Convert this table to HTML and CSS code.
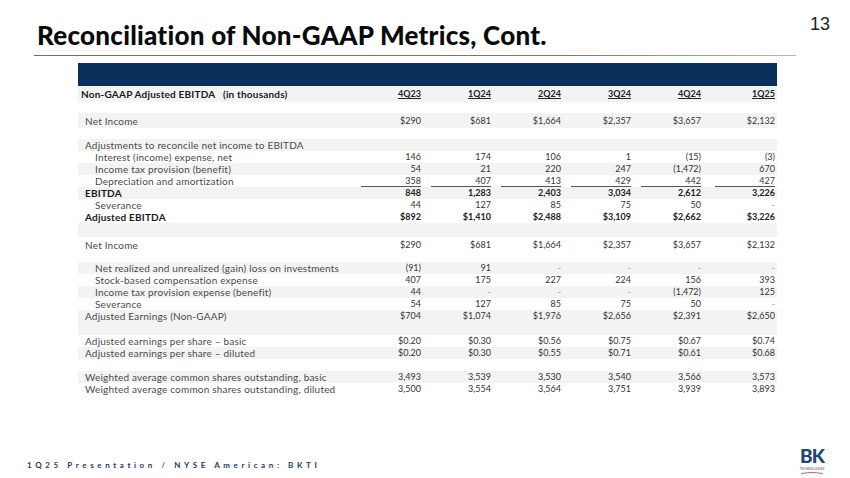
FILE: index.html
```html
<!DOCTYPE html>
<html>
<head>
<meta charset="utf-8">
<link rel="stylesheet" href="styles.css">
</head>
<body>
<div class="slide">
  <div class="top">
    <h1>Reconciliation of Non-GAAP Metrics, Cont.</h1>
    <span class="pg">13</span>
  </div>
  <div class="rule"></div>
  <section class="table">
    <div class="bar"></div>
    <div class="row g head h16">
      <span class="lab hd">Non-GAAP Adjusted EBITDA&nbsp;&nbsp; (in thousands)</span>
      <span class="v"><u>4Q23</u></span><span class="v"><u>1Q24</u></span><span class="v"><u>2Q24</u></span><span class="v"><u>3Q24</u></span><span class="v"><u>4Q24</u></span><span class="v"><u>1Q25</u></span>
    </div>
    <div class="row h11"></div>
    <div class="row g h15">
      <span class="lab">Net Income</span>
      <span class="v">$290</span><span class="v">$681</span><span class="v">$1,664</span><span class="v">$2,357</span><span class="v">$3,657</span><span class="v">$2,132</span>
    </div>
    <div class="row h11"></div>
    <div class="row g">
      <span class="lab">Adjustments to reconcile net income to EBITDA</span>
    </div>
    <div class="row">
      <span class="lab in">Interest (income) expense, net</span>
      <span class="v">146</span><span class="v">174</span><span class="v">106</span><span class="v">1</span><span class="v">(15)</span><span class="v">(3)</span>
    </div>
    <div class="row g">
      <span class="lab in">Income tax provision (benefit)</span>
      <span class="v">54</span><span class="v">21</span><span class="v">220</span><span class="v">247</span><span class="v">(1,472)</span><span class="v">670</span>
    </div>
    <div class="row ul">
      <span class="lab in">Depreciation and amortization</span>
      <span class="v"><span class="u">358</span></span><span class="v"><span class="u">407</span></span><span class="v"><span class="u">413</span></span><span class="v"><span class="u">429</span></span><span class="v"><span class="u">442</span></span><span class="v"><span class="u">427</span></span>
    </div>
    <div class="row g b">
      <span class="lab">EBITDA</span>
      <span class="v">848</span><span class="v">1,283</span><span class="v">2,403</span><span class="v">3,034</span><span class="v">2,612</span><span class="v">3,226</span>
    </div>
    <div class="row">
      <span class="lab in">Severance</span>
      <span class="v">44</span><span class="v">127</span><span class="v">85</span><span class="v">75</span><span class="v">50</span><span class="v d">-</span>
    </div>
    <div class="row b">
      <span class="lab">Adjusted EBITDA</span>
      <span class="v">$892</span><span class="v">$1,410</span><span class="v">$2,488</span><span class="v">$3,109</span><span class="v">$2,662</span><span class="v">$3,226</span>
    </div>
    <div class="row g h14"></div>
    <div class="row h15">
      <span class="lab">Net Income</span>
      <span class="v">$290</span><span class="v">$681</span><span class="v">$1,664</span><span class="v">$2,357</span><span class="v">$3,657</span><span class="v">$2,132</span>
    </div>
    <div class="row h10"></div>
    <div class="row g">
      <span class="lab in">Net realized and unrealized (gain) loss on investments</span>
      <span class="v">(91)</span><span class="v">91</span><span class="v d">-</span><span class="v d">-</span><span class="v d">-</span><span class="v d">-</span>
    </div>
    <div class="row">
      <span class="lab in">Stock-based compensation expense</span>
      <span class="v">407</span><span class="v">175</span><span class="v">227</span><span class="v">224</span><span class="v">156</span><span class="v">393</span>
    </div>
    <div class="row g">
      <span class="lab in">Income tax provision expense (benefit)</span>
      <span class="v">44</span><span class="v d">-</span><span class="v d">-</span><span class="v d">-</span><span class="v">(1,472)</span><span class="v">125</span>
    </div>
    <div class="row">
      <span class="lab in">Severance</span>
      <span class="v">54</span><span class="v">127</span><span class="v">85</span><span class="v">75</span><span class="v">50</span><span class="v d">-</span>
    </div>
    <div class="row g">
      <span class="lab">Adjusted Earnings (Non-GAAP)</span>
      <span class="v">$704</span><span class="v">$1,074</span><span class="v">$1,976</span><span class="v">$2,656</span><span class="v">$2,391</span><span class="v">$2,650</span>
    </div>
    <div class="row g h13"></div>
    <div class="row">
      <span class="lab">Adjusted earnings per share – basic</span>
      <span class="v">$0.20</span><span class="v">$0.30</span><span class="v">$0.56</span><span class="v">$0.75</span><span class="v">$0.67</span><span class="v">$0.74</span>
    </div>
    <div class="row g">
      <span class="lab">Adjusted earnings per share – diluted</span>
      <span class="v">$0.20</span><span class="v">$0.30</span><span class="v">$0.55</span><span class="v">$0.71</span><span class="v">$0.61</span><span class="v">$0.68</span>
    </div>
    <div class="row"></div>
    <div class="row g">
      <span class="lab">Weighted average common shares outstanding, basic</span>
      <span class="v">3,493</span><span class="v">3,539</span><span class="v">3,530</span><span class="v">3,540</span><span class="v">3,566</span><span class="v">3,573</span>
    </div>
    <div class="row">
      <span class="lab">Weighted average common shares outstanding, diluted</span>
      <span class="v">3,500</span><span class="v">3,554</span><span class="v">3,564</span><span class="v">3,751</span><span class="v">3,939</span><span class="v">3,893</span>
    </div>
  </section>
  <footer class="foot">
    <span class="tag">1Q25 Presentation <span class="sl">/</span> NYSE American: BKTI</span>
    <div class="logo">
      <span class="bk">BK</span>
      <span class="tech">TECHNOLOGIES</span>
      <svg class="arc" width="24" height="3" viewBox="0 0 24 3"><path d="M1 2.5 Q12 0.2 23 2.5" fill="none" stroke="#c0504d" stroke-width="0.9"/></svg>
    </div>
  </footer>
</div>
</body>
</html>
```

FILE: styles.css
```css
body {
  margin: 0;
  background: #fff;
}
.slide {
  width: 850px;
  height: 478px;
  display: flex;
  flex-direction: column;
  overflow: hidden;
  font-family: Lato, "Liberation Sans", sans-serif;
  font-variant-ligatures: none;
}
.top {
  height: 55px;
  display: flex;
  justify-content: space-between;
  align-items: flex-start;
  padding: 0 20px 0 37px;
  box-sizing: border-box;
}
h1 {
  margin: 22px 0 0;
  font: 900 26px/26px Lato, "Liberation Sans", sans-serif;
  letter-spacing: 0.25px;
  color: #0a0a0a;
}
.pg {
  margin-top: 15px;
  font: 18px/18px "Liberation Sans", Arial, sans-serif;
  color: #222;
}
.rule {
  height: 1px;
  margin: 0 54px 0 34px;
  background: linear-gradient(90deg, #b5504a, #c25a55 70%, #d9aaa7);
}
.table {
  margin: 7px 0 0 78px;
  width: 699px;
}
.bar {
  height: 23px;
  background: #0b2f5b;
}
.row {
  display: grid;
  grid-template-columns: 273px repeat(5, 70px) 74px;
  padding-right: 2px;
  height: 12px;
  align-items: center;
  color: #333;
}
.g { background: #f3f3f3; }
.h10 { height: 10px; }
.h11 { height: 11px; }
.h13 { height: 13px; }
.h14 { height: 14px; }
.h15 { height: 15px; }
.h16 { height: 16px; }
.lab {
  padding-left: 7px;
  font-size: 10px;
  line-height: 12px;
  letter-spacing: 0.2px;
  color: #4a4a4a;
  white-space: nowrap;
}
.lab.in { padding-left: 17px; }
.lab.hd {
  padding-left: 3px;
  font-weight: 700;
  color: #1a1a1a;
}
.b .lab {
  font-weight: 700;
  color: #1a1a1a;
}
.v {
  text-align: right;
  font-size: 9px;
  line-height: 12px;
  color: #333;
}
.head .v {
  font-weight: 700;
  color: #222;
}
.b .v { font-weight: 700; color: #222; }
.v.d { color: #999; }
.ul .v {
  display: flex;
  justify-content: flex-end;
}
.u {
  display: block;
  width: 60px;
  border-bottom: 1px solid #555;
  line-height: 11px;
}
.foot {
  margin-top: auto;
  display: flex;
  justify-content: space-between;
  align-items: flex-end;
  padding: 0 20px 8px 27px;
}
.tag {
  font-size: 8px;
  font-weight: 700;
  letter-spacing: 3.6px;
  color: #1f3864;
  line-height: 10px;
}
.sl { color: #c0392b; }
.logo {
  width: 30px;
  display: flex;
  flex-direction: column;
  align-items: center;
  margin: 0 3px -4px 0;
}
.bk {
  font-size: 19px;
  font-weight: 900;
  letter-spacing: -1px;
  line-height: 23px;
  color: #22466e;
}
.tech {
  font-size: 3px;
  line-height: 4px;
  color: #22466e;
  letter-spacing: 0.2px;
}
.arc { display: block; }
```
